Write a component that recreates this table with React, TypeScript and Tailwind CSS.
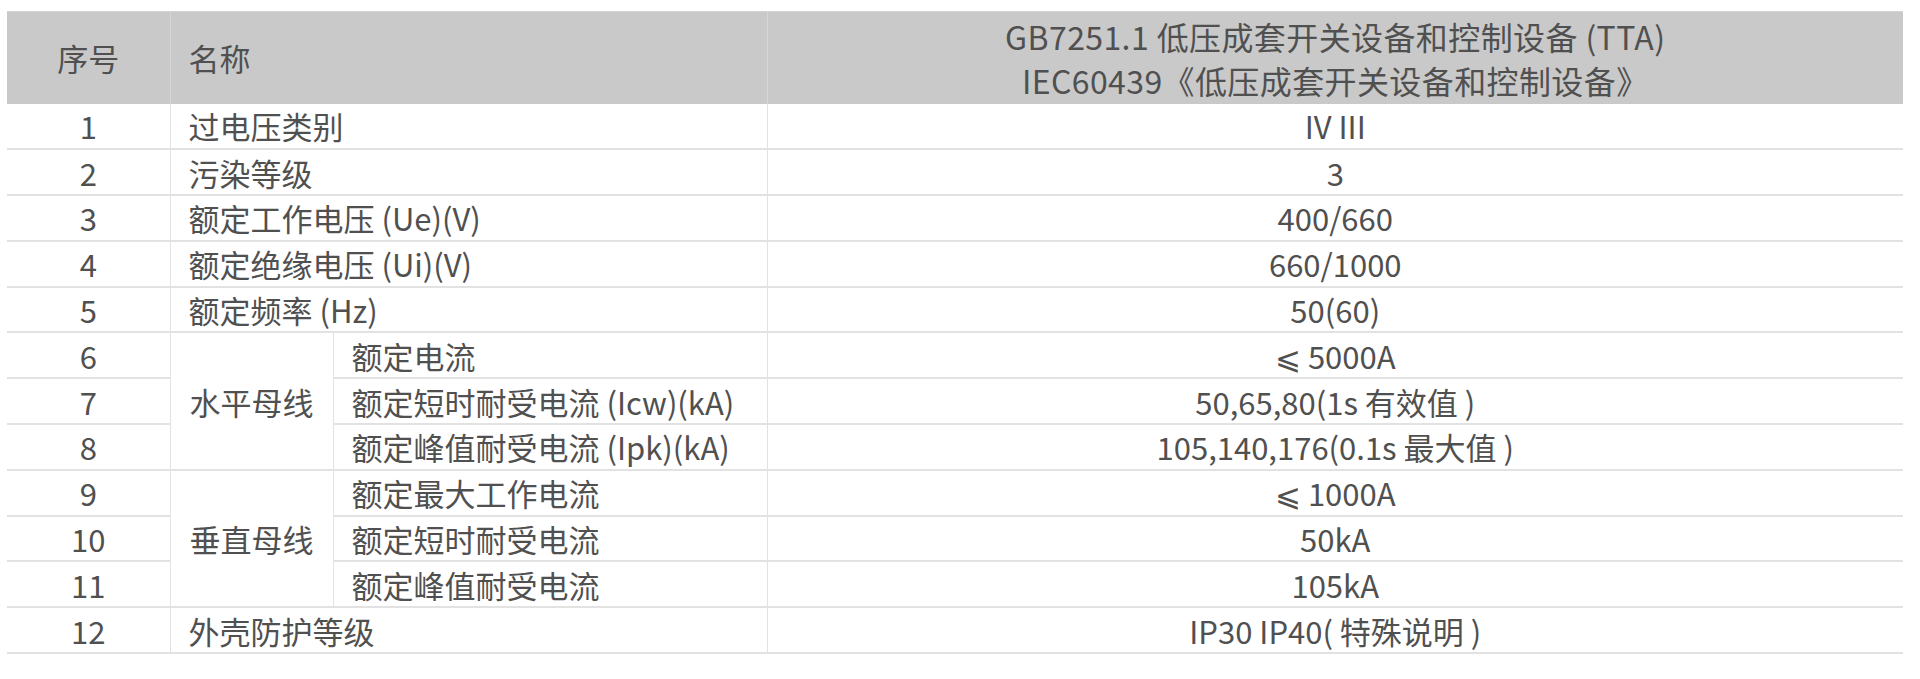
const rows: { no: number; name?: string; group?: string; groupSpan?: number; sub?: string; value: string }[] = [
  { no: 1, name: '过电压类别', value: 'IV III' },
  { no: 2, name: '污染等级', value: '3' },
  { no: 3, name: '额定工作电压 (Ue)(V)', value: '400/660' },
  { no: 4, name: '额定绝缘电压 (Ui)(V)', value: '660/1000' },
  { no: 5, name: '额定频率 (Hz)', value: '50(60)' },
  { no: 6, group: '水平母线', groupSpan: 3, sub: '额定电流', value: '⩽ 5000A' },
  { no: 7, sub: '额定短时耐受电流 (Icw)(kA)', value: '50,65,80(1s 有效值 )' },
  { no: 8, sub: '额定峰值耐受电流 (Ipk)(kA)', value: '105,140,176(0.1s 最大值 )' },
  { no: 9, group: '垂直母线', groupSpan: 3, sub: '额定最大工作电流', value: '⩽ 1000A' },
  { no: 10, sub: '额定短时耐受电流', value: '50kA' },
  { no: 11, sub: '额定峰值耐受电流', value: '105kA' },
  { no: 12, name: '外壳防护等级', value: 'IP30 IP40( 特殊说明 )' },
];

const App = () => {
  return (
    <div
      className="min-h-screen bg-white pt-[11px] pl-[7px] text-[#505050]"
      style={{ fontFamily: '"Noto Sans CJK SC", "Noto Sans", sans-serif' }}
    >
      <table className="w-[1896px] border-collapse table-fixed text-[31px] leading-none">
        <colgroup>
          <col className="w-[163px]" />
          <col className="w-[163px]" />
          <col className="w-[434px]" />
          <col />
        </colgroup>
        <thead>
          <tr className="h-[92px] bg-[#c9c9c9] border-t border-[#d3d3d3]">
            <th className="font-normal text-center border-r border-[#d6d6d6]">序号</th>
            <th colSpan={2} className="font-normal text-left pl-[18px] border-r border-[#d6d6d6]">名称</th>
            <th className="font-normal text-center text-[32px] leading-[44px] tracking-[0.4px]">
              GB7251.1 低压成套开关设备和控制设备 (TTA)
              <br />
              IEC60439《低压成套开关设备和控制设备》
            </th>
          </tr>
        </thead>
        <tbody>
          {rows.map((r) => (
            <tr key={r.no} className="h-[45.8px] border-b-2 border-[#e2e2e2]">
              <td className="text-center border-r border-[#e2e2e2]">{r.no}</td>
              {r.name && (
                <td colSpan={2} className="pl-[18px] border-r border-[#e2e2e2]">
                  {r.name}
                </td>
              )}
              {r.group && (
                <td rowSpan={r.groupSpan} className="text-center border-r border-[#e2e2e2] border-b-2">
                  {r.group}
                </td>
              )}
              {r.sub && <td className="pl-[18px] border-r border-[#e2e2e2]">{r.sub}</td>}
              <td className="text-center">{r.value}</td>
            </tr>
          ))}
        </tbody>
      </table>
    </div>
  );
};

export default App;
